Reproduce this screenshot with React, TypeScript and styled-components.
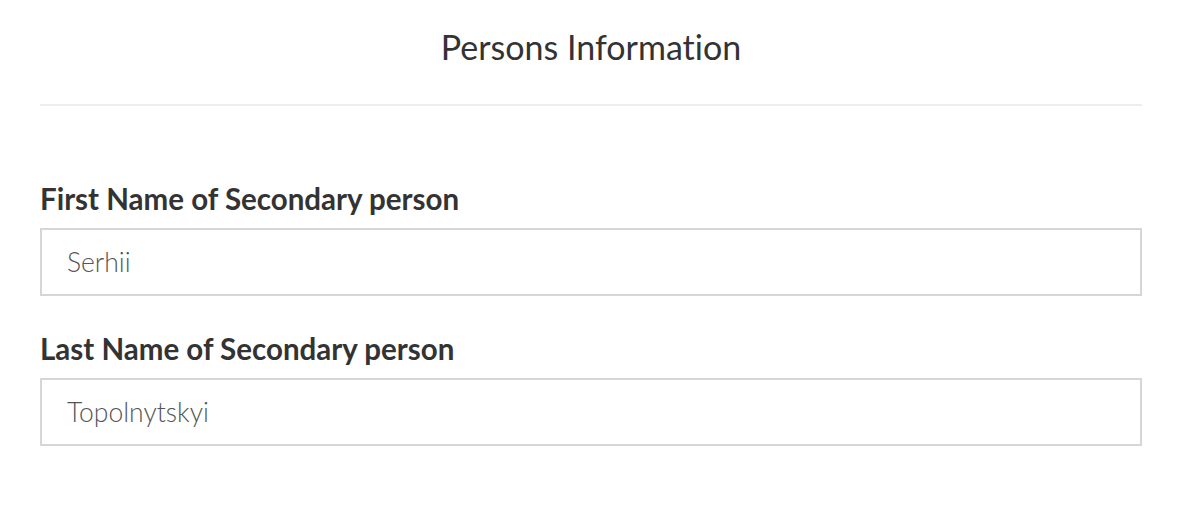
import styled, { createGlobalStyle } from "styled-components";

const Global = createGlobalStyle`
  body {
    margin: 0;
    background: #ffffff;
    font-family: Lato, "Open Sans", sans-serif;
    font-variant-ligatures: none;
    color: #333333;
  }
`;

const fields = [
  { id: "first", label: "First Name of Secondary person", value: "Serhii" },
  { id: "last", label: "Last Name of Secondary person", value: "Topolnytskyi" },
];

const App = () => {
  return (
    <>
      <Global />
      <Wrap>
        <Header>
          <Title>Persons Information</Title>
        </Header>
        <Form>
          {fields.map((field) => (
            <Group key={field.id}>
              <Label htmlFor={field.id}>{field.label}</Label>
              <Input id={field.id} defaultValue={field.value} />
            </Group>
          ))}
        </Form>
      </Wrap>
    </>
  );
};

export default App;

const Wrap = styled.div`
  width: 1102px;
  margin-left: 40px;
`;

const Header = styled.div`
  display: flex;
  justify-content: center;
  padding-top: 26px;
  padding-bottom: 36px;
  border-bottom: 2px solid #eeeeee;
`;

const Title = styled.h1`
  margin: 0;
  font-size: 34px;
  font-weight: 400;
  line-height: 42px;
  color: #333333;
  font-variant-ligatures: none;
`;

const Form = styled.div`
  display: flex;
  flex-direction: column;
  gap: 36px;
  padding-top: 76px;
`;

const Group = styled.div`
  display: flex;
  flex-direction: column;
  gap: 12px;
`;

const Label = styled.label`
  font-size: 29.5px;
  font-weight: 700;
  line-height: 34px;
  color: #333333;
`;

const Input = styled.input`
  box-sizing: border-box;
  width: 100%;
  height: 68px;
  padding: 0 25px;
  border: 2px solid #d5d5da;
  border-radius: 0;
  outline: none;
  font-family: Lato, "Open Sans", sans-serif;
  font-size: 26.5px;
  font-weight: 300;
  font-variant-ligatures: none;
  color: #555555;
  background: #ffffff;
`;
